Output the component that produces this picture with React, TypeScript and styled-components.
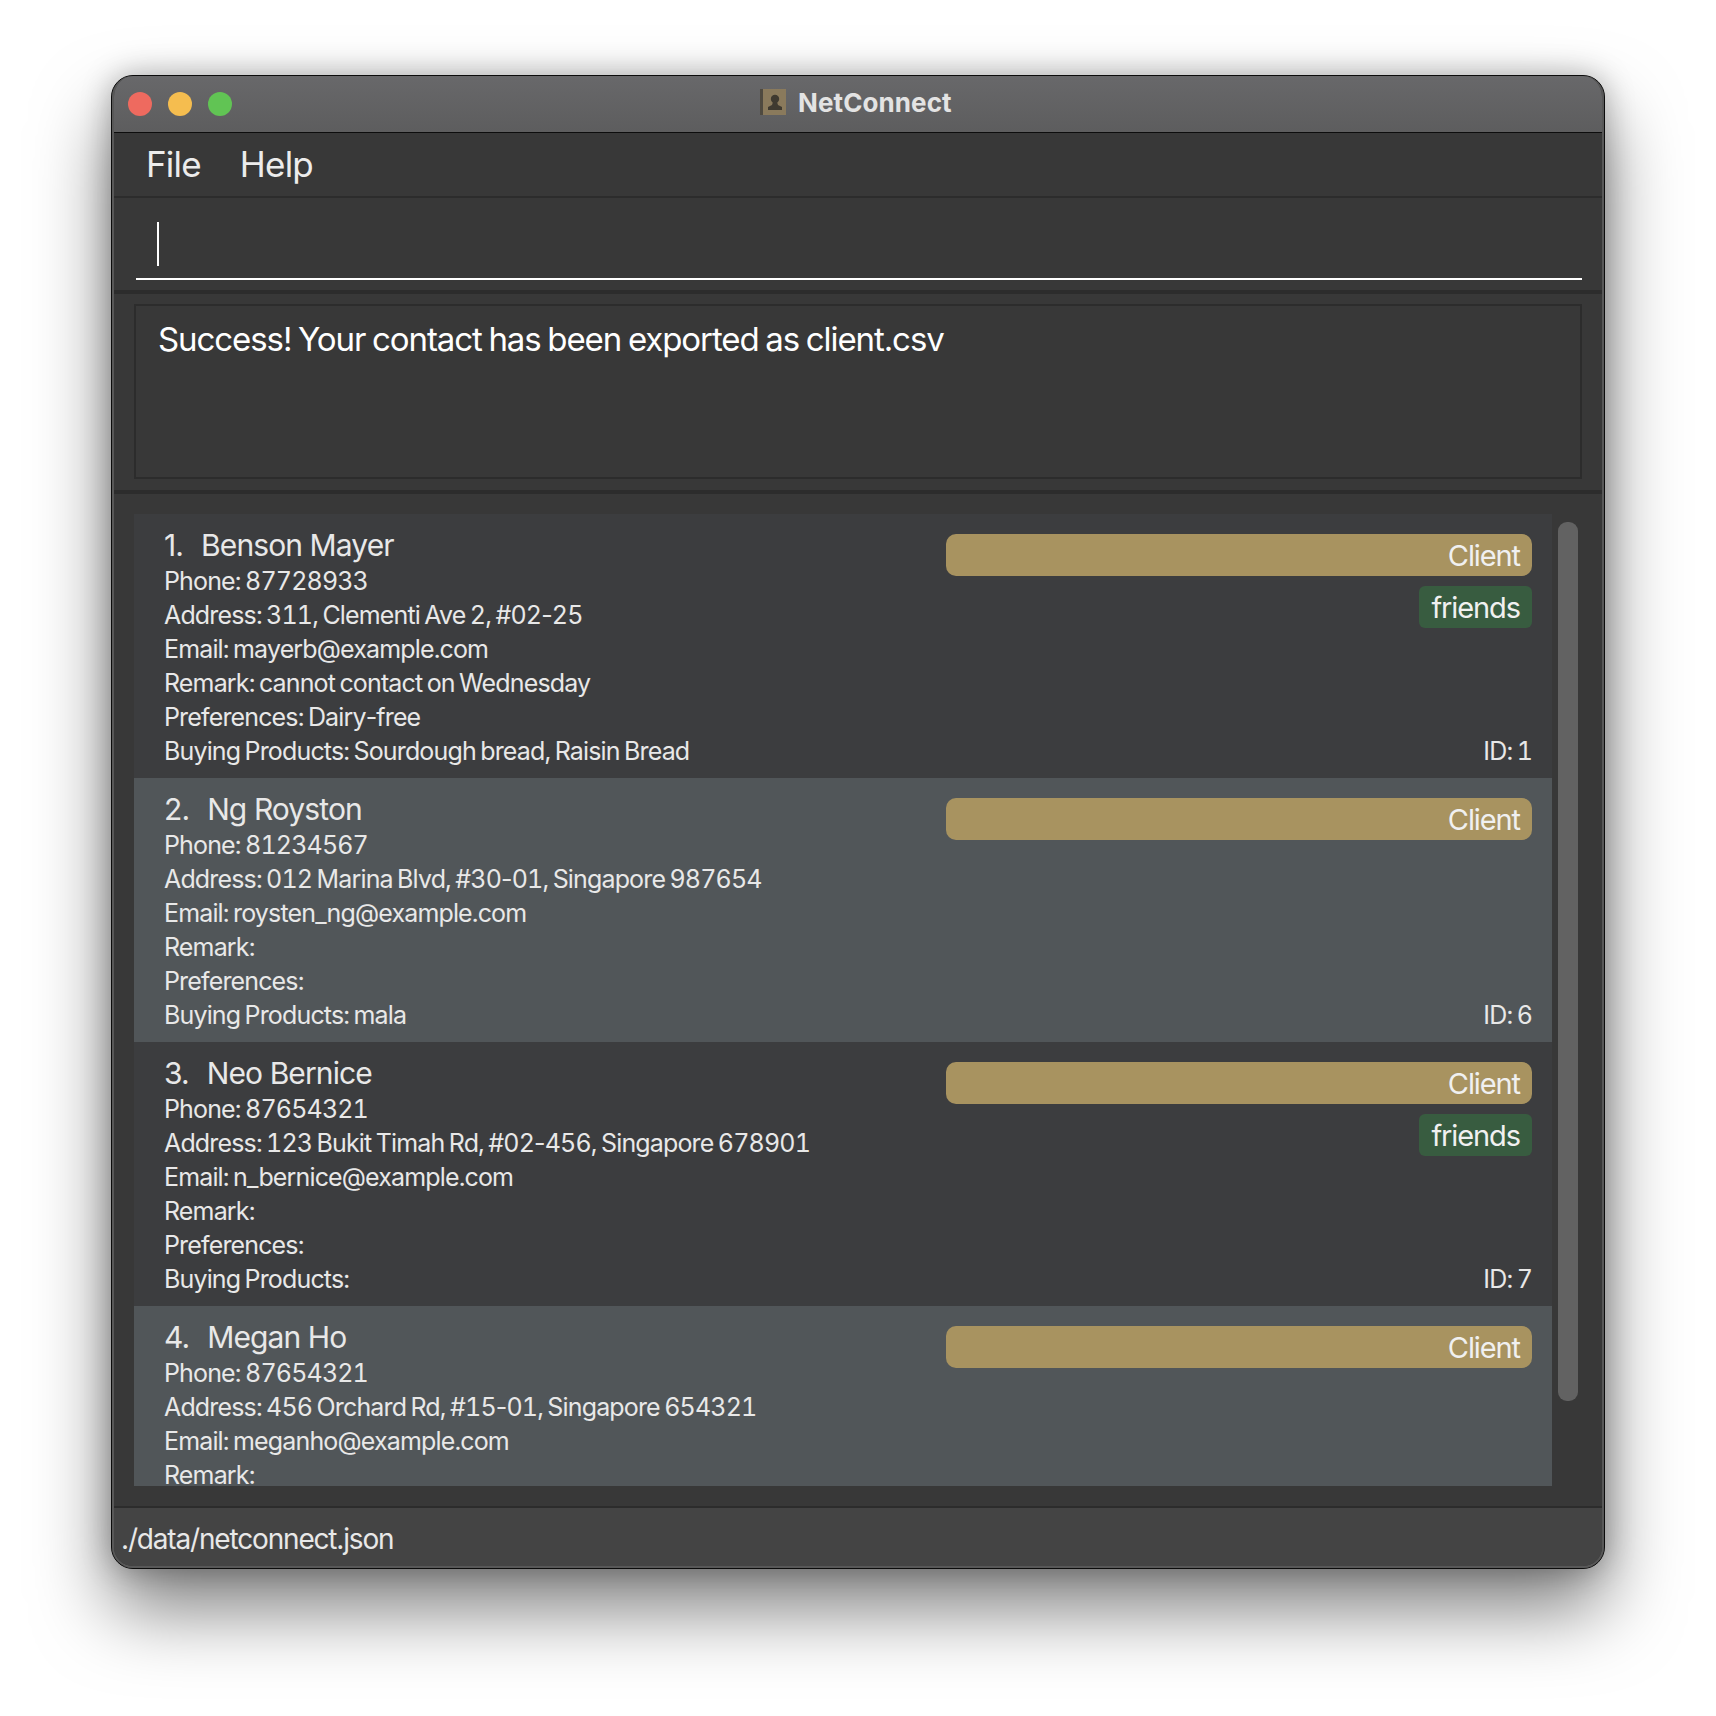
import React, { FC } from "react";
import styled, { createGlobalStyle } from "styled-components";

const GlobalStyle = createGlobalStyle`
  html, body {
    margin: 0;
    padding: 0;
    background: #fff;
  }
  body {
    font-family: Inter, "Liberation Sans", sans-serif;
  }
`;

const Page = styled.div`
  width: 1716px;
  height: 1716px;
  box-sizing: border-box;
  padding: 75px 111px 0;
  overflow: hidden;
  background: #fff;
`;

const Window = styled.div`
  width: 1494px;
  height: 1494px;
  box-sizing: border-box;
  border: 1px solid #0c0c0c;
  border-radius: 22px;
  background: #383838;
  box-shadow: 0 40px 76px rgba(0, 0, 0, 0.5), 0 0 30px rgba(0, 0, 0, 0.28);
`;

const Frame = styled.div`
  height: 100%;
  box-sizing: border-box;
  display: flex;
  flex-direction: column;
  overflow: hidden;
  border: solid #585858;
  border-width: 0 2px 2px;
  border-radius: 21px;
`;

const TitleBar = styled.div`
  height: 57px;
  flex: none;
  box-sizing: border-box;
  display: flex;
  align-items: center;
  padding-left: 14px;
  border-bottom: 1px solid #0d0d0d;
  background: linear-gradient(#68686a, #5d5d5e);
`;

const Lights = styled.div`
  display: flex;
  gap: 16px;
  width: 632px;
`;

const Light = styled.span<{ $color: string }>`
  width: 24px;
  height: 24px;
  border-radius: 50%;
  background: ${({ $color }) => $color};
`;

const TitleText = styled.div`
  display: flex;
  align-items: center;
  gap: 12px;
  padding-bottom: 4px;
  color: #e3e3e3;
  font-size: 26px;
  font-weight: 700;
  letter-spacing: 0.1px;
`;

const MenuBar = styled.div`
  height: 65px;
  flex: none;
  box-sizing: border-box;
  display: flex;
  align-items: center;
  gap: 39px;
  padding: 0 0 2px 32px;
  border-bottom: 2px solid #2c2c2c;
  color: #ececec;
  font-size: 35px;
  letter-spacing: -0.8px;
`;

const CommandSection = styled.div`
  height: 96px;
  flex: none;
  box-sizing: border-box;
  padding: 0 20px 0 22px;
  border-bottom: 4px solid #2c2c2c;
`;

const CommandInput = styled.div`
  height: 82px;
  box-sizing: border-box;
  padding: 24px 0 0 21px;
  border-bottom: 2px solid #fff;
`;

const Caret = styled.div`
  width: 2px;
  height: 44px;
  background: #fff;
`;

const ResultSection = styled.div`
  height: 200px;
  flex: none;
  box-sizing: border-box;
  padding: 10px 20px 11px;
  border-bottom: 4px solid #2c2c2c;
`;

const ResultBox = styled.div`
  height: 100%;
  box-sizing: border-box;
  padding: 13px 22px;
  border: 2px solid #2c2c2c;
  color: #fff;
  font-size: 33px;
  letter-spacing: -1.08px;
  word-spacing: -1.5px;
`;

const ListSection = styled.div`
  flex: 1;
  min-height: 0;
  display: flex;
  gap: 6px;
  padding: 20px 24px 20px 20px;
  border-bottom: 2px solid #2c2c2c;
`;

const CardList = styled.div`
  flex: 1;
  min-width: 0;
  overflow: hidden;
`;

const ScrollTrack = styled.div`
  width: 20px;
  flex: none;
  padding-top: 8px;
`;

const ScrollThumb = styled.div`
  height: 879px;
  border-radius: 9px;
  background: #626262;
`;

const CardRow = styled.div<{ $even: boolean }>`
  height: 264px;
  box-sizing: border-box;
  display: flex;
  justify-content: space-between;
  padding: 10px 20px 10px 30px;
  background: ${({ $even }) => ($even ? "#515659" : "#3c3d3f")};
  color: #e8e8e8;
`;

const CardInfo = styled.div`
  display: flex;
  flex-direction: column;
`;

const NameLine = styled.div`
  display: flex;
  gap: 18px;
  height: 40px;
  line-height: 42px;
  font-size: 30px;
  letter-spacing: -0.9px;
`;

const DetailLine = styled.div`
  height: 34px;
  line-height: 34px;
  font-size: 25px;
  font-variant-numeric: tabular-nums;
  letter-spacing: -0.85px;
  word-spacing: -1.5px;
  white-space: nowrap;
`;

const Hyphen = styled.span`
  font-variant-numeric: normal;
`;

const CardSide = styled.div`
  width: 586px;
  flex: none;
  display: flex;
  flex-direction: column;
  align-items: flex-end;
  gap: 10px;
  padding-top: 10px;
`;

const Chip = styled.div<{ $wide?: boolean }>`
  height: 42px;
  line-height: 44px;
  box-sizing: border-box;
  padding: 0 12px;
  align-self: ${({ $wide }) => ($wide ? "stretch" : "flex-end")};
  text-align: right;
  border-radius: ${({ $wide }) => ($wide ? "10px" : "6px")};
  background: ${({ $wide }) => ($wide ? "#a89360" : "#385c40")};
  color: #f0f0f0;
  font-size: 29px;
  letter-spacing: -1.1px;
`;

const CardId = styled.div`
  margin-top: auto;
  height: 34px;
  line-height: 34px;
  font-size: 25px;
  font-variant-numeric: tabular-nums;
  letter-spacing: -0.85px;
  word-spacing: -1.5px;
`;

const StatusBar = styled.div`
  height: 58px;
  flex: none;
  box-sizing: border-box;
  display: flex;
  align-items: center;
  padding: 4px 0 0 7px;
  background: #444;
  color: #e8e8e8;
  font-size: 28px;
  letter-spacing: -1.17px;
`;

const AppIcon: FC = () => (
  <svg width="26" height="26" viewBox="0 0 26 26">
    <rect x="0" y="0" width="26" height="26" fill="#8a7a5c" />
    <rect x="0" y="0" width="3" height="26" fill="#4f4a40" />
    <circle cx="15" cy="10" r="4.2" fill="#3f3a30" />
    <path d="M13 13h4l1 3 4 2v3H8v-3l4-2z" fill="#3f3a30" />
  </svg>
);

interface Person {
  name: string;
  phone: string;
  address: string;
  email: string;
  remark: string;
  preferences: string;
  products: string;
  id: number;
  friends: boolean;
}

const people: Person[] = [
  {
    name: "Benson Mayer",
    phone: "87728933",
    address: "311, Clementi Ave 2, #02-25",
    email: "mayerb@example.com",
    remark: "cannot contact on Wednesday",
    preferences: "Dairy-free",
    products: "Sourdough bread, Raisin Bread",
    id: 1,
    friends: true,
  },
  {
    name: "Ng Royston",
    phone: "81234567",
    address: "012 Marina Blvd, #30-01, Singapore 987654",
    email: "roysten_ng@example.com",
    remark: "",
    preferences: "",
    products: "mala",
    id: 6,
    friends: false,
  },
  {
    name: "Neo Bernice",
    phone: "87654321",
    address: "123 Bukit Timah Rd, #02-456, Singapore 678901",
    email: "n_bernice@example.com",
    remark: "",
    preferences: "",
    products: "",
    id: 7,
    friends: true,
  },
  {
    name: "Megan Ho",
    phone: "87654321",
    address: "456 Orchard Rd, #15-01, Singapore 654321",
    email: "meganho@example.com",
    remark: "",
    preferences: "",
    products: "",
    id: 8,
    friends: false,
  },
];

// tabular digits widen the hyphen too, so hyphens keep their normal width
const withHyphens = (text: string) =>
  text.split("-").map((part, i) => (
    <React.Fragment key={i}>
      {i > 0 && <Hyphen>-</Hyphen>}
      {part}
    </React.Fragment>
  ));

const PersonCard: FC<{ person: Person; index: number }> = ({ person, index }) => (
  <CardRow $even={index % 2 === 1}>
    <CardInfo>
      <NameLine>
        <span>{index + 1}.</span>
        <span>{person.name}</span>
      </NameLine>
      <DetailLine>Phone: {person.phone}</DetailLine>
      <DetailLine>Address: {withHyphens(person.address)}</DetailLine>
      <DetailLine>Email: {person.email}</DetailLine>
      <DetailLine>Remark: {person.remark}</DetailLine>
      <DetailLine>Preferences: {withHyphens(person.preferences)}</DetailLine>
      <DetailLine>Buying Products: {person.products}</DetailLine>
    </CardInfo>
    <CardSide>
      <Chip $wide>Client</Chip>
      {person.friends && <Chip>friends</Chip>}
      <CardId>ID: {person.id}</CardId>
    </CardSide>
  </CardRow>
);

const App: FC = () => (
  <Page>
    <GlobalStyle />
    <Window>
      <Frame>
        <TitleBar>
          <Lights>
            <Light $color="#ee6a5f" />
            <Light $color="#f5bd4f" />
            <Light $color="#61c454" />
          </Lights>
          <TitleText>
            <AppIcon />
            NetConnect
          </TitleText>
        </TitleBar>
        <MenuBar>
          <span>File</span>
          <span>Help</span>
        </MenuBar>
        <CommandSection>
          <CommandInput>
            <Caret />
          </CommandInput>
        </CommandSection>
        <ResultSection>
          <ResultBox>Success! Your contact has been exported as client.csv</ResultBox>
        </ResultSection>
        <ListSection>
          <CardList>
            {people.map((person, index) => (
              <PersonCard key={person.id} person={person} index={index} />
            ))}
          </CardList>
          <ScrollTrack>
            <ScrollThumb />
          </ScrollTrack>
        </ListSection>
        <StatusBar>./data/netconnect.json</StatusBar>
      </Frame>
    </Window>
  </Page>
);

export default App;
